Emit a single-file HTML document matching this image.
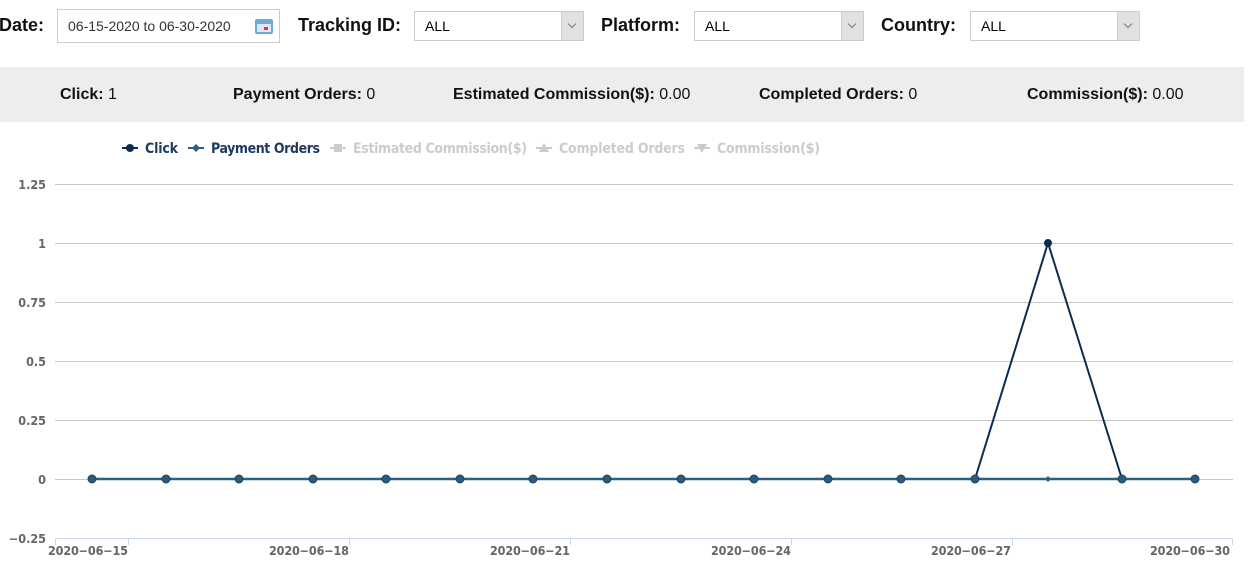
<!DOCTYPE html>
<html><head><meta charset="utf-8"><style>
body{margin:0;width:1252px;height:573px;background:#fff;font-family:"Liberation Sans",Arial,sans-serif;position:relative;overflow:hidden}
.a{position:absolute}
.lbl{font-weight:bold;font-size:18px;color:#111;top:15px}
.box{border:1px solid #ccc;background:#fff;height:30px;top:11px;box-sizing:border-box;font-size:14px;line-height:28px;padding-left:10px;color:#000}
.dd{position:absolute;right:0;top:0;width:21px;height:28px;background:#e1e1e1;border-left:1px solid #ccc;}
.dd:after{content:"";position:absolute;left:7px;top:9px;width:5px;height:5px;border-right:1px solid #777;border-bottom:1px solid #777;transform:rotate(45deg)}
.bar{left:0;top:67px;width:1244px;height:55px;background:#ededed}
.st{top:86px;font-size:16px;color:#111}
.st b{font-weight:bold}
</style></head><body>
<div class="a lbl" style="left:-1px">Date:</div>
<div class="a box" style="left:57px;width:223px;height:34px;top:9px;line-height:32px;color:#333">06-15-2020 to 06-30-2020
<div class="a" style="left:197px;top:9px;width:18px;height:15px;background:#6fa8dc;border-radius:2px"><div class="a" style="left:2px;top:5px;width:14px;height:8px;background:#dde8f5"></div><div class="a" style="left:9px;top:8px;width:4px;height:3px;background:#e33"></div></div></div>
<div class="a lbl" style="left:298px">Tracking ID:</div>
<div class="a box" style="left:414px;width:170px">ALL<div class="dd"></div></div>
<div class="a lbl" style="left:601px">Platform:</div>
<div class="a box" style="left:694px;width:170px">ALL<div class="dd"></div></div>
<div class="a lbl" style="left:881px">Country:</div>
<div class="a box" style="left:970px;width:170px">ALL<div class="dd"></div></div>
<div class="a bar"></div>
<div class="a st" style="left:60px"><b>Click:</b> 1</div>
<div class="a st" style="left:233px"><b>Payment Orders:</b> 0</div>
<div class="a st" style="left:453px"><b>Estimated Commission($):</b> 0.00</div>
<div class="a st" style="left:759px"><b>Completed Orders:</b> 0</div>
<div class="a st" style="left:1027px"><b>Commission($):</b> 0.00</div>
<svg class="a" style="left:0;top:0" width="1252" height="573" font-family="DejaVu Sans Condensed, DejaVu Sans, sans-serif" font-weight="bold">
<g font-size="14">
<line x1="122" y1="148" x2="138" y2="148" stroke="#0b2d52" stroke-width="2"/><circle cx="130" cy="148" r="4" fill="#0b2d52"/>
<text x="145" y="153" fill="#1d3a5f" textLength="33">Click</text>
<line x1="188" y1="148" x2="204" y2="148" stroke="#2b6080" stroke-width="2"/><path d="M196 144 L200 148 L196 152 L192 148Z" fill="#2b6080"/>
<text x="211" y="153" fill="#1d3a5f" textLength="109">Payment Orders</text>
<line x1="330" y1="148" x2="346" y2="148" stroke="#ccc" stroke-width="2"/><rect x="334" y="144" width="8" height="8" fill="#ccc"/>
<text x="353" y="153" fill="#ccc" textLength="174">Estimated Commission($)</text>
<line x1="536" y1="148" x2="552" y2="148" stroke="#ccc" stroke-width="2"/><path d="M544 143 L549 152 L539 152Z" fill="#ccc"/>
<text x="559" y="153" fill="#ccc" textLength="126">Completed Orders</text>
<line x1="694" y1="148" x2="710" y2="148" stroke="#ccc" stroke-width="2"/><path d="M702 153 L707 144 L697 144Z" fill="#ccc"/>
<text x="717" y="153" fill="#ccc" textLength="103">Commission($)</text>
</g>
<g stroke="#c8c8c8" stroke-width="1">
<line x1="55" y1="184.5" x2="1233" y2="184.5"/><line x1="55" y1="243.5" x2="1233" y2="243.5"/><line x1="55" y1="302.5" x2="1233" y2="302.5"/><line x1="55" y1="361.5" x2="1233" y2="361.5"/><line x1="55" y1="420.5" x2="1233" y2="420.5"/><line x1="55" y1="479.5" x2="1233" y2="479.5"/>
</g>
<g stroke="#ccd6eb"><line x1="55" y1="538.5" x2="1233" y2="538.5"/>
<line x1="55.5" y1="538" x2="55.5" y2="545"/><line x1="128.5" y1="538" x2="128.5" y2="545"/><line x1="349.5" y1="538" x2="349.5" y2="545"/><line x1="570.5" y1="538" x2="570.5" y2="545"/><line x1="791.5" y1="538" x2="791.5" y2="545"/><line x1="1012.5" y1="538" x2="1012.5" y2="545"/><line x1="1232.5" y1="538" x2="1232.5" y2="545"/></g>
<g font-size="12.5" fill="#666" text-anchor="end">
<text x="46" y="189">1.25</text><text x="46" y="248">1</text><text x="46" y="307">0.75</text><text x="46" y="366">0.5</text><text x="46" y="425">0.25</text><text x="46" y="484">0</text><text x="46" y="543">−0.25</text>
</g>
<g font-size="12.5" fill="#666" text-anchor="middle">
<text x="88" y="555" textLength="80">2020−06−15</text><text x="309" y="555" textLength="80">2020−06−18</text><text x="530" y="555" textLength="80">2020−06−21</text><text x="751" y="555" textLength="80">2020−06−24</text><text x="971" y="555" textLength="80">2020−06−27</text><text x="1190" y="555" textLength="80">2020−06−30</text>
</g>
<polyline points="92,479 1195,479" stroke="#2b6080" stroke-width="2.5" fill="none"/>
<polyline points="975,479 1048,243 1122,479" stroke="#0b2d52" stroke-width="2" fill="none"/>
<g fill="#2b5a7c" stroke="#1d4566" stroke-width="1">
<circle cx="92" cy="479" r="4"/><circle cx="166" cy="479" r="4"/><circle cx="239" cy="479" r="4"/><circle cx="313" cy="479" r="4"/><circle cx="386" cy="479" r="4"/><circle cx="460" cy="479" r="4"/><circle cx="533" cy="479" r="4"/><circle cx="607" cy="479" r="4"/><circle cx="681" cy="479" r="4"/><circle cx="754" cy="479" r="4"/><circle cx="828" cy="479" r="4"/><circle cx="901" cy="479" r="4"/><circle cx="975" cy="479" r="4"/><circle cx="1122" cy="479" r="4"/><circle cx="1195" cy="479" r="4"/>
</g>
<circle cx="1048" cy="243" r="4" fill="#0b2d52"/>
<path d="M1048 476 L1051 479 L1048 482 L1045 479Z" fill="#2b6080"/>
</svg>
</body></html>
